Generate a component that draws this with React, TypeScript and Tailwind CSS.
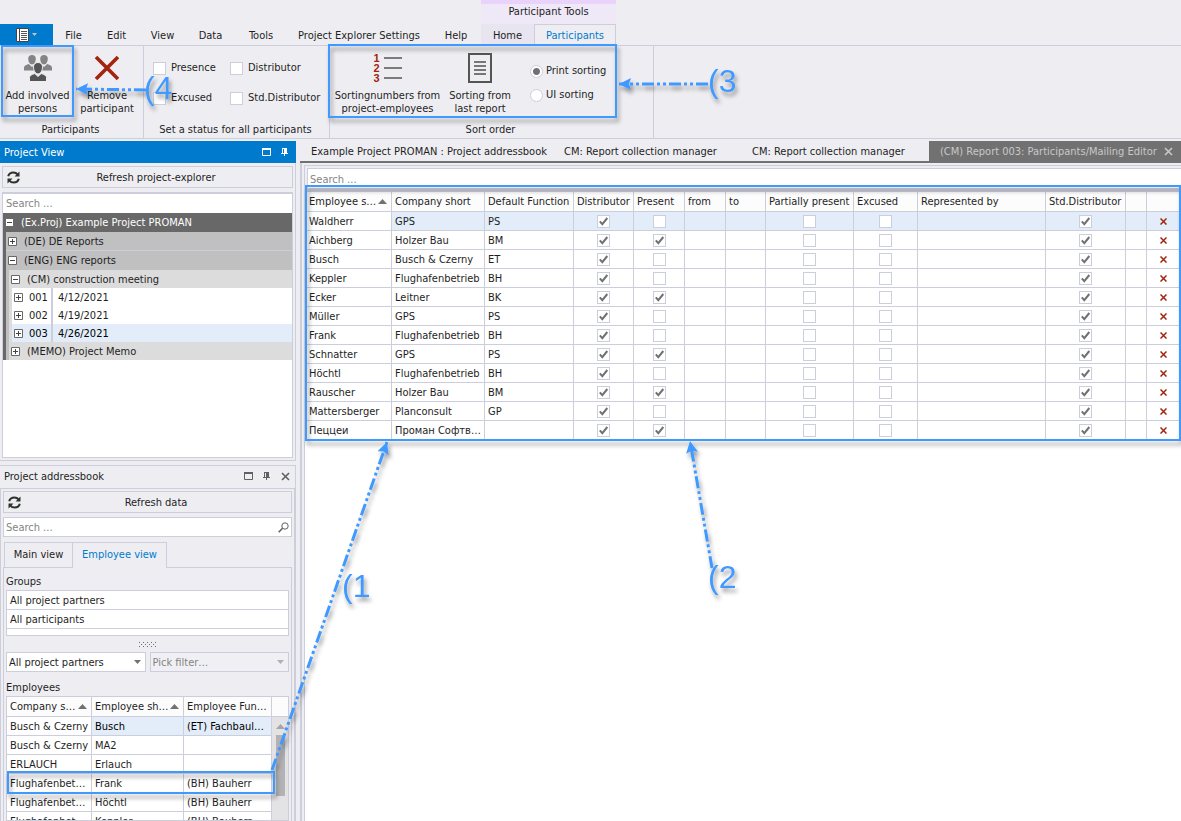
import { useState } from 'react';
import type { ReactNode } from 'react';

type Participant = {
  name: string;
  company: string;
  role: string;
  present: boolean;
};

const participants: Participant[] = [
  { name: 'Waldherr', company: 'GPS', role: 'PS', present: false },
  { name: 'Aichberg', company: 'Holzer Bau', role: 'BM', present: true },
  { name: 'Busch', company: 'Busch & Czerny', role: 'ET', present: false },
  { name: 'Keppler', company: 'Flughafenbetrieb', role: 'BH', present: false },
  { name: 'Ecker', company: 'Leitner', role: 'BK', present: true },
  { name: 'Müller', company: 'GPS', role: 'PS', present: false },
  { name: 'Frank', company: 'Flughafenbetrieb', role: 'BH', present: false },
  { name: 'Schnatter', company: 'GPS', role: 'PS', present: true },
  { name: 'Höchtl', company: 'Flughafenbetrieb', role: 'BH', present: false },
  { name: 'Rauscher', company: 'Holzer Bau', role: 'BM', present: true },
  { name: 'Mattersberger', company: 'Planconsult', role: 'GP', present: false },
  { name: 'Пеццеи', company: 'Проман Софтв…', role: '', present: true },
];

const employees = [
  ['Busch & Czerny', 'Busch', '(ET) Fachbaul…'],
  ['Busch & Czerny', 'MA2', ''],
  ['ERLAUCH', 'Erlauch', ''],
  ['Flughafenbet…', 'Frank', '(BH) Bauherr'],
  ['Flughafenbet…', 'Höchtl', '(BH) Bauherr'],
  ['Flughafenbet…', 'Keppler', '(BH) Bauherr'],
];

const menuItems = [
  { label: 'File', width: 'w-[41px]' },
  { label: 'Edit', width: 'w-[45px]' },
  { label: 'View', width: 'w-[47px]' },
  { label: 'Data', width: 'w-[49px]' },
  { label: 'Tools', width: 'w-[52px]' },
  { label: 'Project Explorer Settings', width: 'w-[144px]' },
  { label: 'Help', width: 'w-[50px]' },
];

function CheckBox({ label, checked = false }: { label: string; checked?: boolean }) {
  return (
    <span className="inline-grid size-[13px] align-top">
      <input
        type="checkbox"
        aria-label={label}
        defaultChecked={checked}
        className="peer col-start-1 row-start-1 size-[13px] appearance-none border border-[#cccedb] bg-white"
      />
      <svg
        viewBox="0 0 13 13"
        className="pointer-events-none invisible col-start-1 row-start-1 size-[13px] peer-checked:visible"
      >
        <path d="M2.8 6.4 5.3 9.2 10.3 3" fill="none" stroke="#717171" strokeWidth="2" />
      </svg>
    </span>
  );
}

function StatusCheck({ label }: { label: string }) {
  return (
    <label className="flex items-center gap-[5px]">
      <CheckBox label={label} />
      {label}
    </label>
  );
}

function SortRadio({ label, checked = false }: { label: string; checked?: boolean }) {
  return (
    <label className="flex items-center gap-[3px]">
      <input
        type="radio"
        name="sorting"
        defaultChecked={checked}
        className="size-[13px] appearance-none rounded-full border border-[#cccedb] bg-white checked:bg-[radial-gradient(circle,#717171_3px,white_4px)]"
      />
      {label}
    </label>
  );
}

function PeopleIcon() {
  return (
    <svg width="28" height="26" viewBox="0 0 28 26">
      <g fill="#848484">
        <path d="M4.200 3.500C4.200 1.200 5.700 0 8 0s3.800 1.200 3.800 3.500c0 3-1.500 6-3.800 6s-3.800-3-3.800-6Z" />
        <path d="M0 15.500v-3c0-1.700 1.800-2.400 4.800-3.500L8 12l3-2.500v6Z" />
        <path d="M16.200 3.500C16.200 1.200 17.700 0 20 0s3.800 1.200 3.800 3.500c0 3-1.500 6-3.800 6s-3.800-3-3.800-6Z" />
        <path d="M28 15.500v-3c0-1.700-1.800-2.400-4.800-3.500L20 12l-3-2.500v6Z" />
      </g>
      <g fill="#555" stroke="#eeeef2" strokeWidth="1">
        <path d="M5.500 26.500v-4c0-2 2-2.800 5.300-4l3.200 3 3.200-3c3.300 1.200 5.300 2 5.300 4v4Z" />
        <path d="M9.500 11.800c0-2.700 1.700-4.300 4.500-4.300s4.500 1.600 4.500 4.300c0 3.500-1.900 7.200-4.500 7.200s-4.500-3.700-4.500-7.200Z" />
      </g>
    </svg>
  );
}

function RemoveIcon() {
  return (
    <svg width="26" height="26" viewBox="0 0 26 26">
      <path d="M2 2 24 24M24 2 2 24" stroke="#a3240f" strokeWidth="3.6" />
    </svg>
  );
}

function NumbersIcon() {
  return (
    <span className="flex items-center gap-1">
      <span className="flex flex-col font-['Liberation_Sans',sans-serif] text-[11px] leading-[10px] font-bold text-[#a3240f]">
        <span>1</span>
        <span>2</span>
        <span>3</span>
      </span>
      <svg width="18" height="30" viewBox="0 0 18 30">
        <path d="M0 5h18M0 15h18M0 25h18" stroke="#555" strokeWidth="1.600" />
      </svg>
    </span>
  );
}

function ReportIcon() {
  return (
    <svg width="24" height="30" viewBox="0 0 24 30">
      <path d="M1 1h22v28H1Z" fill="none" stroke="#555" strokeWidth="2" />
      <path d="M6 9h12M6 13h12M6 17h12M6 21h12" stroke="#777" strokeWidth="2" />
    </svg>
  );
}

function RefreshIcon() {
  return (
    <svg width="13" height="13" viewBox="0 0 13 13" className="shrink-0">
      <g fill="none" stroke="#2b352b" strokeWidth="2">
        <path d="M1.200 5.200C1.800 2.800 3.900 1.400 6.400 1.400c1.700 0 3.200.7 4.200 2" />
        <path d="M11.800 7.800c-.6 2.400-2.700 3.800-5.200 3.800-1.700 0-3.200-.7-4.200-2" />
      </g>
      <path d="M12.500.5v5h-5ZM.5 12.500v-5h5Z" fill="#2b352b" />
    </svg>
  );
}

function MaximizeIcon() {
  return (
    <svg width="9" height="8" viewBox="0 0 9 8">
      <path d="M.5 1h8v6.500h-8Z" fill="none" stroke="currentColor" />
      <path d="M0 0h9v2H0Z" fill="currentColor" />
    </svg>
  );
}

function PinIcon() {
  return (
    <svg width="8" height="8" viewBox="0 0 8 8">
      <path d="M1 0h5v5h1v1H4v2H3V6H0V5h1ZM2 1v4h1V1Z" fill="currentColor" fillRule="evenodd" />
    </svg>
  );
}

function CloseIcon() {
  return (
    <svg width="9" height="9" viewBox="0 0 9 9">
      <path d="M1 1l7 7M8 1 1 8" stroke="currentColor" strokeWidth="1.600" />
    </svg>
  );
}

function SortArrow() {
  return (
    <svg width="9" height="5" viewBox="0 0 9 5" className="shrink-0">
      <path d="M0 5h9L4.500 0Z" fill="#717171" />
    </svg>
  );
}

function RibbonButton({
  icon,
  lines,
  className,
}: {
  icon: ReactNode;
  lines: [string, string];
  className: string;
}) {
  return (
    <button type="button" className={`flex flex-col items-center whitespace-nowrap leading-[13px] ${className}`}>
      <span className="flex h-[42px] items-center">{icon}</span>
      <span>{lines[0]}</span>
      <span>{lines[1]}</span>
    </button>
  );
}

function RibbonGroup({
  title,
  className,
  children,
}: {
  title: string;
  className: string;
  children: ReactNode;
}) {
  return (
    <section className={`flex flex-col border-r border-[#cccedb] pt-px ${className}`}>
      <div className="flex h-[74px]">{children}</div>
      <h2 className="pr-[2px] text-center leading-[17px]">{title}</h2>
    </section>
  );
}

function Ribbon() {
  return (
    <header className="border-b border-[#cccedb]">
      <div className="flex h-[46px] items-end border-b border-[#cccedb]">
        <button
          type="button"
          aria-label="Application menu"
          className="flex h-[21px] w-[53px] items-center justify-center gap-[3px] bg-[#007acc]"
        >
          <svg width="13" height="14" viewBox="0 0 13 14">
            <path d="M.5.5h12v13H.5Z" fill="#fff" stroke="#444" />
            <path d="M3.500 1v12" stroke="#444" />
            <path d="M5 3.500h6M5 5.500h6M5 7.500h6M5 9.500h6M5 11.500h6" stroke="#555" />
          </svg>
          <svg width="5" height="3" viewBox="0 0 5 3">
            <path d="M0 0h5L2.500 3Z" fill="#c9c2b8" />
          </svg>
        </button>
        <nav className="flex">
          {menuItems.map((item) => (
            <button key={item.label} type="button" className={`h-[21px] pt-[2px] whitespace-nowrap ${item.width}`}>
              {item.label}
            </button>
          ))}
        </nav>
        <div className="w-[135px] border-t-4 border-[#ead3fa] bg-[#efe8f6]">
          <p className="h-[20px] text-center leading-[15px]">Participant Tools</p>
          <div className="flex h-[21px]">
            <button type="button" className="w-[53px] bg-[#e8e5f0] pt-[2px]">
              Home
            </button>
            <button
              type="button"
              className="-mb-px h-[22px] flex-1 border border-b-0 border-[#cccedb] bg-[#eeeef2] text-[#007acc]"
            >
              Participants
            </button>
          </div>
        </div>
      </div>

      <div className="flex h-[92px]">
        <RibbonGroup title="Participants" className="w-[144px]">
          <RibbonButton icon={<PeopleIcon />} lines={['Add involved', 'persons']} className="w-[75px]" />
          <RibbonButton icon={<RemoveIcon />} lines={['Remove', 'participant']} className="w-[64px]" />
        </RibbonGroup>
        <RibbonGroup title="Set a status for all participants" className="w-[186px]">
          <div className="grid grid-cols-[77px_auto] content-start gap-y-[14px] pt-[13px] pl-[9px] leading-[16px]">
            <StatusCheck label="Presence" />
            <StatusCheck label="Distributor" />
            <StatusCheck label="Excused" />
            <StatusCheck label="Std.Distributor" />
          </div>
        </RibbonGroup>
        <RibbonGroup title="Sort order" className="w-[324px]">
          <RibbonButton
            icon={<NumbersIcon />}
            lines={['Sortingnumbers from', 'project-employees']}
            className="w-[115px]"
          />
          <RibbonButton icon={<ReportIcon />} lines={['Sorting from', 'last report']} className="w-[70px]" />
          <div className="flex flex-col gap-2 pt-[16px] pl-[15px] leading-[16px]">
            <SortRadio label="Print sorting" checked />
            <SortRadio label="UI sorting" />
          </div>
        </RibbonGroup>
      </div>
    </header>
  );
}

function Expander({ open }: { open: boolean }) {
  return (
    <svg width="9" height="9" viewBox="0 0 9 9" className="shrink-0">
      <path d="M.5.5h8v8h-8Z" fill="#fff" stroke="#686868" />
      <path d={open ? 'M2 4.500h5' : 'M2 4.500h5M4.500 2v5'} stroke="#444" />
    </svg>
  );
}

function ProjectTree() {
  return (
    <ul className="bg-[#686868]">
      <li>
        <div className="flex h-[19px] items-center gap-[7px] pl-[2px] text-white">
          <Expander open />
          (Ex.Proj) Example Project PROMAN
        </div>
        <ul className="pl-[3px]">
          <li className="flex h-[19px] items-center gap-[7px] border-b border-[#cccedb] bg-[#c0c0c0] pl-[2px]">
            <Expander open={false} />
            (DE) DE Reports
          </li>
          <li className="bg-[#c0c0c0]">
            <div className="flex h-[19px] items-center gap-[7px] pl-[2px]">
              <Expander open />
              (ENG) ENG reports
            </div>
            <ul className="pl-[3px]">
              <li className="bg-[#dcdcdc]">
                <div className="flex h-[18px] items-center gap-[7px] pl-[2px]">
                  <Expander open />
                  (CM) construction meeting
                </div>
                <ul className="pl-[3px]">
                  {[
                    ['001', '4/12/2021', 'bg-white'],
                    ['002', '4/19/2021', 'bg-white'],
                    ['003', '4/26/2021', 'bg-[#e3edf9] text-black'],
                  ].map(([number, date, tone]) => (
                    <li key={number} className={`flex h-[18px] items-center pl-[2px] ${tone}`}>
                      <Expander open={false} />
                      <span className="flex h-full w-[30px] items-center border-r-2 border-[#cccedb] pl-[6px]">
                        {number}
                      </span>
                      <span className="pl-[5px]">{date}</span>
                    </li>
                  ))}
                </ul>
              </li>
              <li className="flex h-[18px] items-center gap-[7px] bg-[#dcdcdc] pl-[2px]">
                <Expander open={false} />
                (MEMO) Project Memo
              </li>
            </ul>
          </li>
        </ul>
      </li>
    </ul>
  );
}

function RefreshButton({ label }: { label: string }) {
  return (
    <button type="button" className="flex h-[22px] w-full items-center border border-[#cccedb] pl-1">
      <RefreshIcon />
      <span className="flex-1">{label}</span>
    </button>
  );
}

function ProjectView() {
  return (
    <section className="flex h-[320px] flex-col border-r border-b border-[#cccedb]">
      <header className="-mr-px flex h-[22px] shrink-0 items-center justify-between bg-[#007acc] pr-[7px] pl-1 text-white">
        <h2>Project View</h2>
        <div className="flex items-center gap-[10px]">
          <button type="button" aria-label="Maximize">
            <MaximizeIcon />
          </button>
          <button type="button" aria-label="Pin">
            <PinIcon />
          </button>
        </div>
      </header>
      <div className="flex flex-1 flex-col gap-[4px] px-[2px] pt-[3px] pb-[2px]">
        <RefreshButton label="Refresh project-explorer" />
        <div className="flex-1 border border-[#cccedb] bg-white">
          <input
            type="search"
            aria-label="Search projects"
            placeholder="Search ..."
            className="block h-[20px] w-full border-t border-[#cccedb] px-[3px] placeholder:text-[#848484]"
          />
          <ProjectTree />
        </div>
      </div>
    </section>
  );
}

function EmployeeTable() {
  return (
    <div className="flex flex-1 overflow-hidden border border-[#cccedb] bg-white">
      <div className="min-w-0 flex-1">
        <table className="w-full table-fixed border-separate border-spacing-0 whitespace-nowrap">
          <colgroup>
            <col className="w-[85px]" />
            <col className="w-[92px]" />
            <col />
          </colgroup>
          <thead>
            <tr className="h-[20px] bg-[#fcfcfd] text-left">
              {['Company s…', 'Employee sh…', 'Employee Fun…'].map((title, i) => (
                <th key={title} className="border-r border-b border-[#cccedb] pr-1 pl-[3px] font-normal">
                  <span className="flex items-center justify-between">
                    {title}
                    {i < 2 ? <SortArrow /> : null}
                  </span>
                </th>
              ))}
            </tr>
          </thead>
          <tbody>
            {employees.map((cells, row) => (
              <tr key={row} className="h-[19px]">
                {cells.map((cell, col) => (
                  <td
                    key={col}
                    className={`overflow-hidden border-r border-b border-[#cccedb] px-[3px] ${
                      row === 0 && col > 0 ? 'bg-[#e3edf9] text-black' : ''
                    }`}
                  >
                    {cell}
                  </td>
                ))}
              </tr>
            ))}
          </tbody>
        </table>
      </div>
      <div className="flex w-[16px] flex-col items-center bg-[#e3e3e6]">
        <div className="h-[20px] w-full border-b border-[#cccedb] bg-[#fcfcfd]" />
        <div className="flex h-[18px] items-center">
          <svg width="9" height="5" viewBox="0 0 9 5">
            <path d="M0 5h9L4.500 0Z" fill="#a5a5a8" />
          </svg>
        </div>
        <div className="h-[61px] w-[9px] bg-[#b3b3b5]" />
      </div>
    </div>
  );
}

function FilterSelect({ label, value, disabled = false }: { label: string; value: string; disabled?: boolean }) {
  return (
    <div className="grid flex-1 items-center">
      <select
        aria-label={label}
        disabled={disabled}
        className={`col-start-1 row-start-1 h-[20px] w-full appearance-none border border-[#cccedb] px-[2px] disabled:opacity-100 ${
          disabled ? 'bg-[#f0f0f4] text-[#848484]' : 'bg-white'
        }`}
      >
        <option>{value}</option>
      </select>
      <svg
        width="7"
        height="4"
        viewBox="0 0 7 4"
        className="pointer-events-none col-start-1 row-start-1 mr-[5px] justify-self-end"
      >
        <path d="M0 0h7L3.500 4Z" fill={disabled ? '#b0b0b4' : '#717171'} />
      </svg>
    </div>
  );
}

function AddressBook() {
  return (
    <section className="mt-1 flex min-h-0 flex-1 flex-col border-t border-r border-[#cccedb]">
      <header className="flex h-[22px] shrink-0 items-center justify-between pr-[5px] pb-[2px] pl-1">
        <h2>Project addressbook</h2>
        <div className="flex items-center gap-[10px] text-[#606060]">
          <button type="button" aria-label="Maximize">
            <MaximizeIcon />
          </button>
          <button type="button" aria-label="Pin">
            <PinIcon />
          </button>
          <button type="button" aria-label="Close">
            <CloseIcon />
          </button>
        </div>
      </header>
      <div className="flex min-h-0 flex-1 flex-col border border-b-0 border-[#cccedb] px-[2px] pt-[2px]">
        <RefreshButton label="Refresh data" />
        <label className="mt-[4px] flex h-[20px] shrink-0 items-center border border-[#cccedb] bg-white px-[2px]">
          <input
            type="search"
            aria-label="Search addressbook"
            placeholder="Search ..."
            className="min-w-0 flex-1 outline-none placeholder:text-[#848484]"
          />
          <svg width="11" height="11" viewBox="0 0 11 11" fill="none" stroke="#606060">
            <circle cx="7" cy="4" r="3.200" />
            <path d="M4.500 6.300.7 10.200" strokeWidth="1.600" />
          </svg>
        </label>
        <div className="mt-[5px] flex h-[26px] shrink-0 pl-px">
          <button type="button" className="h-[25px] w-[68px] border border-r-0 border-b-0 border-[#cccedb] pb-[2px]">
            Main view
          </button>
          <button
            type="button"
            className="z-10 h-[26px] w-[95px] border border-b-0 border-[#cccedb] bg-[#eeeef2] pb-[3px] text-[#007acc]"
          >
            Employee view
          </button>
        </div>
        <div className="-mt-px flex min-h-0 flex-1 flex-col border border-b-0 border-[#cccedb] px-[2px] pt-[5px]">
          <h3 className="leading-[17px]">Groups</h3>
          <ul className="h-[46px] shrink-0 border border-[#cccedb] bg-white">
            {['All project partners', 'All participants'].map((group) => (
              <li key={group} className="flex h-[19px] items-center border-b border-[#cccedb] px-[3px]">
                {group}
              </li>
            ))}
          </ul>
          <div className="flex h-[16px] shrink-0 items-center justify-center">
            <svg width="18" height="5" viewBox="0 0 18 5">
              <path
                d="M0 .5h18M2 2.500h16M0 4.500h18"
                stroke="#717171"
                strokeDasharray="1 3"
              />
            </svg>
          </div>
          <div className="flex gap-1">
            <FilterSelect label="Group filter" value="All project partners" />
            <FilterSelect label="Pick filter" value="Pick filter…" disabled />
          </div>
          <h3 className="mt-[7px] leading-[17px]">Employees</h3>
          <EmployeeTable />
        </div>
      </div>
    </section>
  );
}

const documentTabs = [
  { title: 'Example Project PROMAN : Project addressbook', width: 'w-[253px]' },
  { title: 'CM: Report collection manager', width: 'w-[188px]' },
  { title: 'CM: Report collection manager', width: 'w-[177px]' },
];

const headCell = 'border-r border-b border-[#cccedb] px-[3px] font-normal';
const cell = 'border-r border-b border-[#cccedb] px-[3px]';
const checkCell = 'border-r border-b border-[#cccedb] text-center leading-none';

function ParticipantTable() {
  const [selected, setSelected] = useState('Waldherr');

  return (
    <table className="w-full table-fixed border-separate border-spacing-0 border-t-4 border-[#cccedb] whitespace-nowrap">
      <colgroup>
        <col className="w-[85px]" />
        <col className="w-[93px]" />
        <col className="w-[89px]" />
        <col className="w-[60px]" />
        <col className="w-[51px]" />
        <col className="w-[41px]" />
        <col className="w-[40px]" />
        <col className="w-[88px]" />
        <col className="w-[64px]" />
        <col />
        <col className="w-[80px]" />
        <col className="w-[21px]" />
        <col className="w-[34px]" />
      </colgroup>
      <thead>
        <tr className="h-[20px] bg-[#fcfcfd] text-left">
          <th className="border-r border-b border-[#cccedb] pr-1 pl-[2px] font-normal">
            <span className="flex items-center justify-between">
              Employee s…
              <SortArrow />
            </span>
          </th>
          <th className={headCell}>Company short</th>
          <th className={headCell}>Default Function</th>
          <th className={headCell}>Distributor</th>
          <th className={headCell}>Present</th>
          <th className={headCell}>from</th>
          <th className={headCell}>to</th>
          <th className={headCell}>Partially present</th>
          <th className={headCell}>Excused</th>
          <th className={headCell}>Represented by</th>
          <th className={headCell}>Std.Distributor</th>
          <th className={headCell} />
          <th className={headCell} />
        </tr>
      </thead>
      <tbody>
        {participants.map((person) => (
          <tr
            key={person.name}
            onClick={() => setSelected(person.name)}
            className={person.name === selected ? 'h-[19px] bg-[#e3edf9]' : 'h-[19px]'}
          >
            <td className="border-r border-b border-[#cccedb] bg-white px-[2px]">{person.name}</td>
            <td className={cell}>{person.company}</td>
            <td className={cell}>{person.role}</td>
            <td className={checkCell}>
              <CheckBox label={`${person.name} distributor`} checked />
            </td>
            <td className={checkCell}>
              <CheckBox label={`${person.name} present`} checked={person.present} />
            </td>
            <td className={cell} />
            <td className={cell} />
            <td className={checkCell}>
              <CheckBox label={`${person.name} partially present`} />
            </td>
            <td className={checkCell}>
              <CheckBox label={`${person.name} excused`} />
            </td>
            <td className={cell} />
            <td className={checkCell}>
              <CheckBox label={`${person.name} standard distributor`} checked />
            </td>
            <td className={cell} />
            <td className={checkCell}>
              <button
                type="button"
                aria-label={`Remove ${person.name}`}
                className="flex h-[13px] w-full items-center justify-center"
              >
                <svg width="7" height="7" viewBox="0 0 7 7">
                  <path d="M.5.5l6 6M6.500.5l-6 6" stroke="#a3240f" strokeWidth="1.500" />
                </svg>
              </button>
            </td>
          </tr>
        ))}
      </tbody>
    </table>
  );
}

function Editor() {
  return (
    <main className="flex min-w-0 flex-1 flex-col">
      <nav className="flex h-[22px] shrink-0 border-b-2 border-[#717171]">
        {documentTabs.map((tab, i) => (
          <button key={i} type="button" className={`pl-[11px] text-left whitespace-nowrap ${tab.width}`}>
            {tab.title}
          </button>
        ))}
        <div className="ml-auto flex w-[252px] items-center justify-between bg-[#717171] pr-2 pl-[11px] text-[#c8c8c8]">
          <button type="button" className="whitespace-nowrap">
            (CM) Report 003: Participants/Mailing Editor
          </button>
          <button type="button" aria-label="Close tab">
            <CloseIcon />
          </button>
        </div>
      </nav>
      <div className="flex flex-1 flex-col border-l-2 border-[#cccedb] pt-[2px] pl-[2px]">
        <div className="flex-1 border-t border-l border-[#cccedb] bg-white">
          <div className="border-t-2 border-l-2 border-[#eeeef2]">
            <input
              type="search"
              aria-label="Search participants"
              placeholder="Search ..."
              className="block h-[20px] w-full border-t border-l border-[#cccedb] bg-white px-[2px] pt-px placeholder:text-[#848484]"
            />
            <ParticipantTable />
          </div>
        </div>
      </div>
    </main>
  );
}

const arrows = [
  { x1: 146, y1: 90, x2: 76, y2: 89 },
  { x1: 708, y1: 84, x2: 619, y2: 84 },
  { x1: 272, y1: 770, x2: 387, y2: 442 },
  { x1: 712, y1: 568, x2: 690, y2: 441 },
];

// Numbered callouts drawn over the whole window
function Annotations() {
  return (
    <svg
      width="1181"
      height="821"
      viewBox="0 0 1181 821"
      className="pointer-events-none absolute top-0 left-0 z-20"
    >
      <defs>
        <marker
          id="head"
          viewBox="0 0 12 12"
          refX="12"
          refY="6"
          markerWidth="12"
          markerHeight="12"
          markerUnits="userSpaceOnUse"
          orient="auto"
        >
          <path d="M12 6 0 0l2 6-2 6Z" fill="#4199fe" />
        </marker>
        <filter id="shade" filterUnits="userSpaceOnUse" x="0" y="0" width="1181" height="821">
          <feDropShadow dx="2" dy="4" stdDeviation="2" floodColor="#000" floodOpacity="0.4" />
        </filter>
      </defs>
      <g filter="url(#shade)">
        <g fill="none" stroke="#4199fe" strokeWidth="2">
          <rect x="2" y="46" width="71" height="70" />
          <rect x="329" y="45" width="287" height="72" />
          <rect x="306" y="186" width="874" height="254" />
          <rect x="8" y="772" width="266" height="21" />
        </g>
        <g stroke="#4199fe" strokeWidth="3" strokeDasharray="12 3 3 3 3 3">
          {arrows.map((a) => (
            <line key={a.x2} {...a} markerEnd="url(#head)" />
          ))}
        </g>
        <g className="fill-[#4199fe] font-['Liberation_Sans',Arial,sans-serif] text-[32px]">
          <text x="342" y="597">(1</text>
          <text x="708" y="588">(2</text>
          <text x="708" y="92">(3</text>
          <text x="144" y="99">(4</text>
        </g>
      </g>
    </svg>
  );
}

export default function App() {
  return (
    <div className="relative flex h-screen flex-col overflow-hidden bg-[#eeeef2] font-['DejaVu_Sans_Condensed','DejaVu_Sans',sans-serif] text-[11px] leading-[13px] text-[#1e1e1e]">
      <Ribbon />
      <div className="flex min-h-0 flex-1 gap-1 pt-[2px]">
        <aside className="flex w-[296px] shrink-0 flex-col">
          <ProjectView />
          <AddressBook />
        </aside>
        <Editor />
      </div>
      <Annotations />
    </div>
  );
}
